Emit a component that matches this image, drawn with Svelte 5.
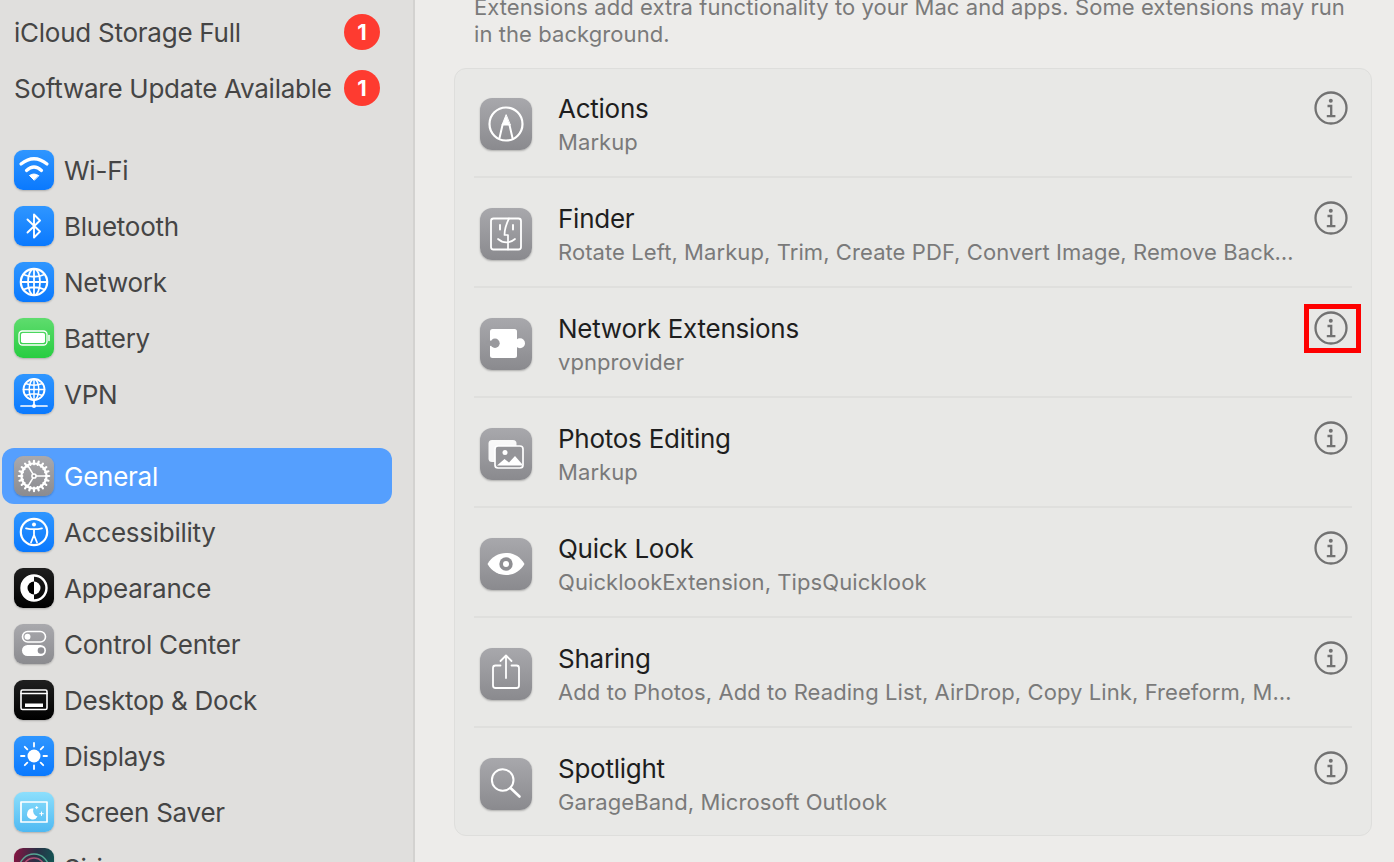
<script>
  const network = [
    { name: 'Wi-Fi', tone: 'blue', icon: 'wifi' },
    { name: 'Bluetooth', tone: 'blue', icon: 'bluetooth' },
    { name: 'Network', tone: 'blue', icon: 'globe' },
    { name: 'Battery', tone: 'green', icon: 'battery' },
    { name: 'VPN', tone: 'blue', icon: 'vpn' }
  ];
  const system = [
    { name: 'General', tone: 'gray', icon: 'gear', active: true },
    { name: 'Accessibility', tone: 'blue', icon: 'access' },
    { name: 'Appearance', tone: 'black', icon: 'appearance' },
    { name: 'Control Center', tone: 'gray', icon: 'control' },
    { name: 'Desktop & Dock', tone: 'black', icon: 'dock' },
    { name: 'Displays', tone: 'blue', icon: 'sun' },
    { name: 'Screen Saver', tone: 'sky', icon: 'saver' },
    { name: 'Siri', tone: 'siri', icon: 'siri' }
  ];
  const rows = [
    { title: 'Actions', sub: 'Markup', icon: 'actions' },
    { title: 'Finder', sub: 'Rotate Left, Markup, Trim, Create PDF, Convert Image, Remove Background', icon: 'finder' },
    { title: 'Network Extensions', sub: 'vpnprovider', icon: 'puzzle', marked: true },
    { title: 'Photos Editing', sub: 'Markup', icon: 'photos' },
    { title: 'Quick Look', sub: 'QuicklookExtension, TipsQuicklook', icon: 'eye' },
    { title: 'Sharing', sub: 'Add to Photos, Add to Reading List, AirDrop, Copy Link, Freeform, Messages', icon: 'share' },
    { title: 'Spotlight', sub: 'GarageBand, Microsoft Outlook', icon: 'search' }
  ];
  const spokes = Array.from({ length: 20 }, (_, i) => i * 18);
</script>

{#snippet glyph(icon)}
  <svg viewBox="0 0 40 40" class="glyph" fill="none" stroke="#fff" stroke-width="2" stroke-linecap="round" stroke-linejoin="round">
    {#if icon === 'wifi'}
      <path d="M7 14Q20 3.500 33 14" stroke-width="3.200" />
      <path d="M12.500 20.500Q20 13.500 27.500 20.500" stroke-width="3.200" />
      <path d="M20 30l-4.500-4.500q4.500-3 9 0z" fill="#fff" stroke-width="1" />
    {:else if icon === 'bluetooth'}
      <path d="M13.500 13.500 26 25.500 20 31.500V8.500l6 6-12.500 12" stroke-width="1.900" />
    {:else if icon === 'globe'}
      <circle cx="20" cy="20" r="13.200" stroke-width="2.200" />
      <ellipse cx="20" cy="20" rx="6" ry="13.200" stroke-width="1.800" />
      <path d="M20 7v26M7 20h26M9.500 12.500q10.500 4.500 21 0M9.500 27.500q10.500-4.500 21 0" stroke-width="1.800" />
    {:else if icon === 'battery'}
      <rect x="5" y="13" width="28" height="14" rx="3.500" stroke-width="1.300" />
      <rect x="7" y="15" width="24" height="10" rx="1.800" fill="#fff" stroke="none" />
      <path d="M35 17.500v5" stroke-width="1.500" />
    {:else if icon === 'vpn'}
      <circle cx="20" cy="15.500" r="10.500" stroke-width="1.900" />
      <ellipse cx="20" cy="15.500" rx="4.800" ry="10.500" stroke-width="1.500" />
      <path d="M20 5v21M9.500 15.500h21M11.500 9.500q8.500 3.500 17 0M11.500 21.500q8.500-3.500 17 0" stroke-width="1.500" />
      <path d="M20 26v6M7 32h26" stroke-width="1.700" />
      <circle cx="20" cy="32" r="2" fill="#fff" stroke="none" />
    {:else if icon === 'gear'}
      <circle cx="20" cy="20" r="12.500" stroke-width="2.200" />
      {#each spokes as a}
        <path d="M20 4.800v3.500" stroke-width="2.200" transform="rotate({a} 20 20)" />
      {/each}
      <circle cx="20" cy="20" r="2.100" stroke-width="1.500" />
      <path d="M22 20h10M19 21.800l-5.500 9.200M19 18.200 13.500 9" stroke-width="1.500" />
    {:else if icon === 'access'}
      <circle cx="20" cy="20" r="13.200" stroke-width="2.200" />
      <circle cx="20" cy="12.600" r="2" fill="#fff" stroke="none" />
      <path d="M12 16.300q8 1.800 16 0M20 17.500v6M20 23l-3 7.500M20 23l3 7.500" stroke-width="1.800" />
    {:else if icon === 'appearance'}
      <circle cx="20" cy="20" r="12.500" stroke-width="2.400" />
      <path d="M20 7.500a12.500 12.500 0 0 0 0 25z" fill="#fff" stroke="none" />
      <path d="M20 13.500a6.500 6.500 0 0 0 0 13z" fill="#000" stroke="none" />
      <path d="M20 13.500a6.500 6.500 0 0 1 0 13z" fill="#fff" stroke="none" />
    {:else if icon === 'control'}
      <rect x="8.500" y="7.500" width="23" height="10.500" rx="5.250" stroke-width="1.600" />
      <circle cx="13.500" cy="12.700" r="3" fill="#fff" stroke="none" />
      <rect x="8" y="21" width="24" height="11" rx="5.500" fill="#fff" stroke="none" />
      <circle cx="27" cy="26.500" r="3.300" fill="#8e8e93" stroke="none" />
    {:else if icon === 'dock'}
      <rect x="7" y="10" width="26" height="19.500" rx="1.500" stroke-width="1.600" />
      <path d="M7 13.500h26" stroke-width="1.500" />
      <rect x="11" y="23.500" width="18" height="3.500" fill="#fff" stroke="none" />
    {:else if icon === 'sun'}
      <circle cx="20" cy="20" r="6.500" fill="#fff" stroke="none" />
      <path d="M20 7v3.500M20 29.500V33M7 20h3.500M29.500 20H33M10.800 10.800l2.500 2.500M26.700 26.700l2.500 2.500M10.800 29.200l2.500-2.500M26.700 13.300l2.500-2.500" stroke-width="1.800" />
    {:else if icon === 'saver'}
      <rect x="7" y="10" width="26" height="20" stroke-width="1.700" />
      <path d="M19.500 16.500a5.500 5.500 0 1 0 4 8a6 6 0 0 1-4-8z" fill="#fff" stroke="none" />
      <path d="M27.500 20v3.500M25.800 21.700h3.500M22.700 14.500v2.200M21.600 15.600h2.200" stroke-width="1" />
    {:else if icon === 'siri'}
      <circle cx="20" cy="21" r="15" stroke="#5ec5a8" stroke-width="1.400" opacity="0.8" />
      <circle cx="20" cy="21" r="11" stroke="#e0608a" stroke-width="1.400" opacity="0.7" />
    {/if}
  </svg>
{/snippet}

{#snippet rowGlyph(icon)}
  <svg viewBox="0 0 52 52" class="glyph" fill="none" stroke="#fff" stroke-width="2" stroke-linecap="round" stroke-linejoin="round">
    {#if icon === 'actions'}
      <circle cx="26" cy="26" r="16.500" stroke-width="2.200" />
      <path d="M26 17l-4 10h8z" fill="#fff" stroke-width="1" />
      <path d="M22.500 27l-3 13M29.500 27l3 13" stroke-width="2" />
    {:else if icon === 'finder'}
      <rect x="11" y="10.500" width="30" height="31" rx="2.500" stroke-width="1.800" />
      <path d="M29 10.500c-2.500 5-4.500 10.500-4.500 16.500h3.500v14.500" stroke-width="1.700" />
      <path d="M18 31c5 4.500 12 4.500 17 0" stroke-width="1.700" />
      <path d="M20 17v4.500M33 17v4.500" stroke-width="1.900" />
    {:else if icon === 'puzzle'}
      <rect x="10" y="11" width="27" height="29" rx="2.500" fill="#fff" stroke="none" />
      <circle cx="40" cy="25.300" r="5" fill="#fff" stroke="none" />
      <circle cx="15" cy="25.300" r="4.700" fill="#99999d" stroke="none" />
      <circle cx="9" cy="25.300" r="3" fill="#99999d" stroke="none" />
    {:else if icon === 'photos'}
      <rect x="8.500" y="12" width="28" height="22" rx="3.500" fill="rgba(255,255,255,.92)" stroke="none" />
      <rect x="15" y="18" width="28" height="22" rx="3" fill="#949498" stroke="#fff" stroke-width="1.700" />
      <circle cx="25" cy="24.500" r="2.500" fill="#fff" stroke="none" />
      <path d="M17 37.500l7.500-6.500 4.500 3.500 6-6.500 7 8v1.500z" fill="#fff" stroke="none" />
    {:else if icon === 'eye'}
      <path d="M7.500 26C12 18.500 18.500 15 26 15s14 3.500 18.500 11C40 33.500 33.500 37 26 37S12 33.500 7.500 26z" fill="#fff" stroke="none" />
      <circle cx="26" cy="26" r="6.700" fill="#8e8e92" stroke="none" />
      <circle cx="26" cy="26" r="3" fill="#fff" stroke="none" />
    {:else if icon === 'share'}
      <path d="M20.500 17.500H15.500a2.500 2.500 0 0 0-2.500 2.500v17.500a2.500 2.500 0 0 0 2.500 2.500h21a2.500 2.500 0 0 0 2.500-2.500V20a2.500 2.500 0 0 0-2.500-2.500H31.500" stroke-width="1.800" />
      <path d="M26 30V7.500M20.500 13 26 7.500l5.500 5.500" stroke-width="1.800" />
    {:else if icon === 'search'}
      <circle cx="22.700" cy="22" r="10.800" stroke-width="2" />
      <path d="M30.500 30l9 8.500" stroke-width="2.600" />
    {/if}
  </svg>
{/snippet}

{#snippet navRow(item)}
  <div class="nav-row" class:active={item.active}>
    <span class="app-icon {item.tone}">{@render glyph(item.icon)}</span>
    <span class="nav-label">{item.name}</span>
  </div>
{/snippet}

<div class="window">
  <aside class="sidebar">
    <div class="group alerts">
      <div class="alert"><span>iCloud Storage Full</span><span class="badge">1</span></div>
      <div class="alert"><span>Software Update Available</span><span class="badge">1</span></div>
    </div>
    <div class="group">
      {#each network as item}{@render navRow(item)}{/each}
    </div>
    <div class="group">
      {#each system as item}{@render navRow(item)}{/each}
    </div>
  </aside>

  <main class="content">
    <p class="intro">Extensions add extra functionality to your Mac and apps. Some extensions may run in the background.</p>
    <section class="card">
      {#each rows as row, i}
        <div class="row" class:first={i === 0}>
          <span class="row-icon">{@render rowGlyph(row.icon)}</span>
          <div class="row-text">
            <div class="row-title">{row.title}</div>
            <div class="row-sub">{row.sub}</div>
          </div>
          <span class="info" class:marked={row.marked}>
            <svg viewBox="0 0 34 34" width="34" height="34" fill="none" stroke="#727272">
              <circle cx="17" cy="17" r="15.500" stroke-width="2.300" />
              <circle cx="16.800" cy="9.800" r="2" fill="#727272" stroke="none" />
              <path d="M13.500 15h3.700v10M12.800 25.200h8.600" stroke-width="2.300" />
            </svg>
          </span>
        </div>
      {/each}
    </section>
  </main>
</div>

<style>
  :global(body) {
    margin: 0;
    overflow: hidden;
    background: #edecea;
  }

  .window {
    display: flex;
    width: 1394px;
    height: 862px;
    overflow: hidden;
    font-family: Inter, "Liberation Sans", sans-serif;
    -webkit-font-smoothing: antialiased;
  }

  .sidebar {
    flex: none;
    width: 415px;
    height: 862px;
    box-sizing: border-box;
    padding: 4px 21px 0 2px;
    background: #e0dfdd;
    border-right: 2px solid #d3d2d0;
    overflow: hidden;
    color: #454545;
    font-size: 26px;
    letter-spacing: -0.25px;
  }

  .group + .group {
    margin-top: 26px;
  }

  .alert {
    display: flex;
    align-items: center;
    justify-content: space-between;
    height: 56px;
    padding: 0 12px;
  }

  .badge {
    display: flex;
    align-items: center;
    justify-content: center;
    width: 36px;
    height: 36px;
    border-radius: 50%;
    background: #fe3b30;
    color: #fff;
    font-size: 22px;
    font-weight: 700;
    letter-spacing: 0;
  }

  .nav-row {
    display: flex;
    align-items: center;
    gap: 10px;
    height: 56px;
    padding-left: 12px;
    border-radius: 12px;
  }

  .nav-row.active {
    background: #559ffe;
    color: #fff;
  }

  .app-icon {
    flex: none;
    width: 40px;
    height: 40px;
    border-radius: 9px;
    box-shadow: 0 1px 2px rgba(0, 0, 0, 0.22);
    overflow: hidden;
  }

  .blue { background: linear-gradient(#2f96ff, #0a79fe); }
  .green { background: linear-gradient(#5fdc6e, #28cd41); }
  .gray { background: linear-gradient(#a9a9ad, #8b8b8f); }
  .black { background: linear-gradient(#1f1f1f, #000); }
  .sky { background: linear-gradient(#8ddffc, #4fb9f2); }
  .siri { background: linear-gradient(100deg, #8a1240, #2a2f45 50%, #0d5f58); }

  .glyph {
    display: block;
    width: 100%;
    height: 100%;
  }

  .content {
    flex: 1;
    min-width: 0;
    padding: 0 22px 0 39px;
  }

  .intro {
    margin: -6px 0 0 20px;
    width: 880px;
    color: #7a7a7a;
    font-size: 22px;
    line-height: 27px;
    letter-spacing: 0.075px;
  }

  .card {
    margin-top: 20px;
    box-sizing: border-box;
    width: 918px;
    height: 768px;
    background: #e8e8e6;
    border: 1px solid #dededc;
    border-radius: 12px;
    padding: 0 19px;
  }

  .row {
    display: flex;
    align-items: flex-start;
    height: 110px;
    box-sizing: border-box;
    border-top: 2px solid #dfdfdd;
    padding-top: 23px;
  }

  .row.first {
    height: 107px;
    border-top: 0;
    padding-top: 22px;
  }

  .row-icon {
    flex: none;
    width: 52px;
    height: 52px;
    margin: 7px 0 0 6px;
    border-radius: 12px;
    background: linear-gradient(#a8a8ac, #8a8a8e);
    box-shadow: 0 1px 2px rgba(0, 0, 0, 0.25);
  }

  .row-text {
    flex: 1;
    min-width: 0;
    margin-left: 26px;
  }

  .row-title {
    color: #1e1e1e;
    font-size: 26px;
    line-height: 36px;
    letter-spacing: -0.26px;
  }

  .row-sub {
    width: 739px;
    overflow: hidden;
    color: #7a7a7a;
    font-size: 22px;
    line-height: 30px;
    letter-spacing: 0.08px;
    white-space: nowrap;
    text-overflow: ellipsis;
  }

  .info {
    flex: none;
    width: 34px;
    height: 34px;
    margin: 0 4px 0 0;
    position: relative;
  }

  .info svg {
    display: block;
  }

  .info.marked::after {
    content: '';
    position: absolute;
    left: -10px;
    top: -7px;
    width: 57px;
    height: 49px;
    box-sizing: border-box;
    border: 5px solid #fe0000;
  }
</style>
